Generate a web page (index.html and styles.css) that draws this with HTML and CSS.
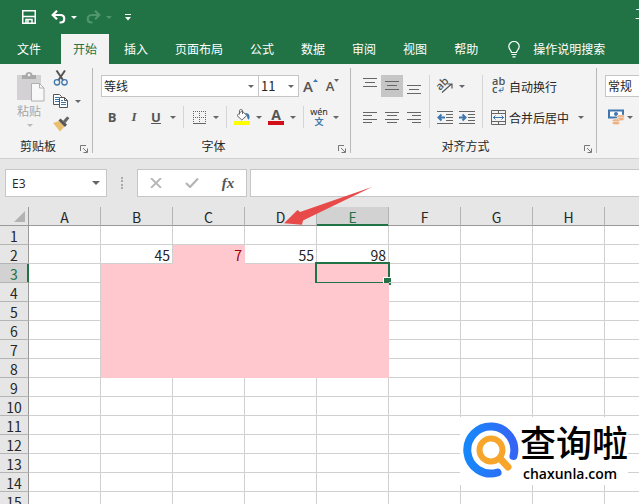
FILE: index.html
```html
<!DOCTYPE html>
<html lang="zh-CN">
<head>
    <meta charset="UTF-8">
    <meta name="viewport" content="width=device-width, initial-scale=1.0">
    <title>Excel</title>
    <link rel="stylesheet" href="styles.css">
</head>
<body>
    <header class="title-bar">
        <button class="quick save" aria-label="保存">
            <svg width="14" height="14" viewBox="0 0 14 14" fill="none" stroke="#fff"><path d="M.75.75h12.5v12.5H.75z" stroke-width="1.5"/><path d="M1 6.5h12" stroke-width="1.5"/><path d="M4 13V9.5h6V13M6 10v3" stroke-width="1.5"/></svg>
        </button>
        <button class="quick undo" aria-label="撤销">
            <svg width="15" height="14" viewBox="0 0 15 14" fill="none" stroke="#fff" stroke-width="2.2"><path d="M6 .7 1.700 5l4.300 4.300M2 5h7.5c5 0 5 7.500 0 7.500H8.500"/></svg>
            <i class="caret"></i>
        </button>
        <button class="quick redo" aria-label="恢复">
            <svg width="15" height="14" viewBox="0 0 15 14" fill="none" stroke="#4f9670" stroke-width="2.2"><path d="M9 .7 13.300 5 9 9.300M13 5H5.500c-5 0-5 7.500 0 7.500H6.500"/></svg>
            <i class="caret"></i>
        </button>
        <button class="quick more" aria-label="自定义快速访问工具栏">
            <svg width="6" height="7" viewBox="0 0 6 7" fill="#fff"><path d="M0 0h6v1H0zM0 3h6L3 6.500z"/></svg>
        </button>
        <span class="book-name">工</span>
    </header>

    <nav class="tabs">
        <button class="tab file">文件</button>
        <button class="tab active">开始</button>
        <button class="tab">插入</button>
        <button class="tab">页面布局</button>
        <button class="tab">公式</button>
        <button class="tab">数据</button>
        <button class="tab">审阅</button>
        <button class="tab">视图</button>
        <button class="tab">帮助</button>
        <button class="tab tell-me">
            <svg width="12" height="17" viewBox="0 0 12 17" fill="none" stroke="#fff" stroke-width="1.200"><path d="M3.500 11.500c0-2-2.700-3-2.700-6a5.200 5 0 0 1 10.400 0c0 3-2.700 4-2.700 6zM3.500 13.500h5M4.500 15.800h3"/></svg>
            操作说明搜索
        </button>
    </nav>

    <section class="ribbon">
        <div class="group clipboard">
            <div class="group-body">
                <button class="paste" disabled>
                    <svg width="28" height="30" viewBox="0 0 28 30"><path d="M0 3h24v25H0z" fill="#d3d1d3"/><path d="M5 3h3.500C8.500-1 15.500-1 15.500 3H19v4H5z" fill="#aaa"/><circle cx="12" cy="3" r="1.300" fill="#f3f3f3"/><path d="M14.500 11.500h8l4.500 4.500v13H14.500z" fill="#f8f8f8" stroke="#b0b0b0"/><path d="M22.500 11.500V16H27" fill="none" stroke="#b0b0b0"/></svg>
                    <span>粘贴</span>
                    <i class="caret"></i>
                </button>
                <div class="clip-tools">
                    <button class="icon-btn" aria-label="剪切">
                        <svg width="16" height="16" viewBox="0 0 16 16" fill="none"><path d="M3.500.5l6.800 10M12 .5l-6.800 10" stroke="#555" stroke-width="2"/><circle cx="4" cy="12.300" r="2.700" stroke="#3e77ad" stroke-width="1.300"/><circle cx="11.500" cy="12.300" r="2.700" stroke="#3e77ad" stroke-width="1.300"/></svg>
                    </button>
                    <button class="icon-btn copy" aria-label="复制">
                        <svg width="16" height="16" viewBox="0 0 16 16" fill="#fff" stroke="#555"><path d="M.5 1.500h6l2 2v8h-8z"/><path d="M2 4.500h4M2 6.500h4M2 8.500h4" stroke="#3e77ad"/><path d="M6.500 4.500h5l3 3v7h-8z"/><path d="M11.500 4.500v3h3" fill="none"/><path d="M8 9.500h5M8 11.500h5M8 7.500h2" stroke="#3e77ad"/></svg>
                        <i class="caret"></i>
                    </button>
                    <button class="icon-btn" aria-label="格式刷">
                        <svg width="17" height="16" viewBox="0 0 17 16"><path d="M0 7l6-2 6 5-5 5.500z" fill="#eabf72"/><path d="M5.500 4.500l2-2 6.500 6-2 2.500z" fill="#555"/><path d="M10 5l4-4.500L16.500 2 12.500 7z" fill="#666"/></svg>
                    </button>
                </div>
            </div>
            <div class="group-label"><span>剪贴板</span><button class="launcher" aria-label="剪贴板设置"><svg width="8" height="8" viewBox="0 0 8 8" fill="none" stroke="#777"><path d="M.5 6V.5H6M3 3l4 4M7.500 3.500v4h-4"/></svg></button></div>
        </div>

        <div class="group font">
            <div class="group-body rows">
                <div class="row">
                    <div class="combo font-name"><select aria-label="字体"><option>等线</option></select></div>
                    <div class="combo font-size"><select aria-label="字号"><option>11</option></select></div>
                    <button class="tool letter grow" aria-label="增大字号">A<svg width="6" height="4" viewBox="0 0 6 4" fill="#3e77ad"><path d="M0 3h5L2.500 0z"/></svg></button>
                    <button class="tool letter shrink" aria-label="减小字号">A<svg width="6" height="4" viewBox="0 0 6 4" fill="#666"><path d="M0 0h5L2.500 3z"/></svg></button>
                </div>
                <div class="row">
                    <button class="tool letter">B</button>
                    <button class="tool letter italic">I</button>
                    <button class="tool letter underline">U</button>
                    <button class="drop" aria-label="下划线选项"><i class="caret"></i></button>
                    <span class="divider"></span>
                    <button class="tool" aria-label="边框"><svg width="13" height="13" viewBox="0 0 13 13" fill="none" stroke="#666"><path d="M.5 0v12M6.500 0v12M12.500 0v12M0 .5h13M0 6.500h13" stroke-dasharray="1 1"/><path d="M0 12.500h13"/></svg></button>
                    <button class="drop" aria-label="边框选项"><i class="caret"></i></button>
                    <span class="divider"></span>
                    <button class="tool" aria-label="填充颜色"><svg width="17" height="16" viewBox="0 0 17 16"><path d="M0 12h16v4H0z" fill="#ffff00"/><path d="M3 6.500l5-4.700 4.800 4.700-5 4.500z" fill="#fff" stroke="#666"/><path d="M5.500 5.500V1.800c0-2 3-2 3 0V5" fill="none" stroke="#666"/><path d="M11 4c4 0 5.500 2.500 4 6.500-1 .5-2-2-2-4z" fill="#3e77ad"/></svg></button>
                    <button class="drop" aria-label="填充颜色选项"><i class="caret"></i></button>
                    <button class="tool letter font-color" aria-label="字体颜色">A</button>
                    <button class="drop" aria-label="字体颜色选项"><i class="caret"></i></button>
                    <span class="divider"></span>
                    <button class="tool phonetic" aria-label="拼音"><span>wén</span><span class="wen">文</span></button>
                    <button class="drop" aria-label="拼音选项"><i class="caret"></i></button>
                </div>
            </div>
            <div class="group-label"><span>字体</span><button class="launcher" aria-label="字体设置"><svg width="8" height="8" viewBox="0 0 8 8" fill="none" stroke="#777"><path d="M.5 6V.5H6M3 3l4 4M7.500 3.500v4h-4"/></svg></button></div>
        </div>

        <div class="group align">
            <div class="group-body">
                <div class="rows">
                    <div class="row">
                        <button class="tool" aria-label="顶端对齐"><svg width="14" height="16" viewBox="0 0 14 16" stroke="#666"><path d="M0 .5h14M2 4.500h10M0 8.500h14"/></svg></button>
                        <button class="tool pressed" aria-label="垂直居中"><svg width="14" height="16" viewBox="0 0 14 16" stroke="#666"><path d="M0 3.500h14M2 7.500h10M0 11.500h14"/></svg></button>
                        <button class="tool" aria-label="底端对齐"><svg width="14" height="16" viewBox="0 0 14 16" stroke="#666"><path d="M0 7.500h14M2 11.500h10M0 15.500h14"/></svg></button>
                    </div>
                    <div class="row">
                        <button class="tool" aria-label="左对齐"><svg width="14" height="11" viewBox="0 0 14 11" stroke="#666"><path d="M0 .5h14M0 3.500h9M0 7.500h14M0 10.500h9"/></svg></button>
                        <button class="tool" aria-label="居中"><svg width="14" height="11" viewBox="0 0 14 11" stroke="#666"><path d="M0 .5h14M2 3.500h10M0 7.500h14M2 10.500h10"/></svg></button>
                        <button class="tool" aria-label="右对齐"><svg width="14" height="11" viewBox="0 0 14 11" stroke="#666"><path d="M0 .5h14M5 3.500h9M0 7.500h14M5 10.500h9"/></svg></button>
                    </div>
                </div>
                <span class="divider"></span>
                <div class="rows">
                    <div class="row">
                        <button class="tool orient" aria-label="方向"><svg width="18" height="18" viewBox="0 0 18 18"><text x="1" y="11" transform="rotate(-45 6 9)">ab</text><path d="M6 15.500L15.500 7M11.500 7H16v4.500" fill="none" stroke="#555" stroke-width="1.200"/></svg></button>
                        <button class="drop" aria-label="方向选项"><i class="caret"></i></button>
                    </div>
                    <div class="row">
                        <button class="tool" aria-label="减少缩进量"><svg width="16" height="13" viewBox="0 0 16 13" fill="none" stroke="#666"><path d="M0 .5h16M9 3.500h7M9 6.500h7M9 9.500h7M0 12.500h16"/><path d="M8 6.500H2M4.500 3.500l-3 3 3 3" stroke="#3e77ad" stroke-width="2"/></svg></button>
                        <button class="tool" aria-label="增加缩进量"><svg width="16" height="13" viewBox="0 0 16 13" fill="none" stroke="#666"><path d="M0 .5h16M9 3.500h7M9 6.500h7M9 9.500h7M0 12.500h16"/><path d="M0 6.500h6M3.500 3.500l3 3-3 3" stroke="#3e77ad" stroke-width="2"/></svg></button>
                    </div>
                </div>
                <span class="divider"></span>
                <div class="rows">
                    <button class="text-tool"><span class="tool"><svg class="wrap-icon" width="14" height="18" viewBox="0 0 14 18"><text x="1" y="8">ab</text><text x="1" y="16">c</text><path d="M12 10v3.500H8M10 11.500l-2 2 2 2" fill="none" stroke="#3e77ad"/></svg></span>自动换行</button>
                    <button class="text-tool"><span class="tool"><svg width="15" height="15" viewBox="0 0 15 15" fill="none" stroke="#666"><path d="M.5.5h14v14H.5zM.5 3.500h14M.5 11.500h14M7.500.5v3M7.500 11.500v3"/><path d="M2 7.500h11M4.500 5.500l-2 2 2 2M10.500 5.500l2 2-2 2" stroke="#3e77ad"/></svg></span>合并后居中<i class="caret"></i></button>
                </div>
            </div>
            <div class="group-label"><span>对齐方式</span><button class="launcher" aria-label="对齐设置"><svg width="8" height="8" viewBox="0 0 8 8" fill="none" stroke="#777"><path d="M.5 6V.5H6M3 3l4 4M7.500 3.500v4h-4"/></svg></button></div>
        </div>

        <div class="group number">
            <div class="group-body rows">
                <div class="row">
                    <div class="combo format"><select aria-label="数字格式"><option>常规</option></select></div>
                </div>
                <div class="row">
                    <button class="tool" aria-label="会计数字格式"><svg width="17" height="16" viewBox="0 0 17 16"><path d="M1 1.500h14v7H1z" fill="#fff" stroke="#3e77ad" stroke-width="2"/><circle cx="8" cy="5" r="2" fill="#3e77ad"/><g fill="#eeb07e" stroke="#f3f3f3" stroke-width=".6"><ellipse cx="12.500" cy="7.500" rx="3.800" ry="1.800"/><ellipse cx="12.500" cy="10" rx="3.800" ry="1.800"/><ellipse cx="8" cy="11.500" rx="3.800" ry="1.800"/><ellipse cx="8" cy="14" rx="3.800" ry="1.800"/></g></svg></button>
                    <button class="drop" aria-label="货币选项"><i class="caret"></i></button>
                </div>
            </div>
        </div>
    </section>

    <section class="formula-bar">
        <div class="name-box"><input type="text" value="E3" aria-label="名称框"><i class="caret"></i></div>
        <span class="grip"></span>
        <div class="formula-tools">
            <button aria-label="取消"><svg width="12" height="10" viewBox="0 0 12 10" stroke="#b5b5b5" stroke-width="1.800"><path d="M1 0l10 10M11 0L1 10"/></svg></button>
            <button aria-label="输入"><svg width="14" height="10" viewBox="0 0 14 10" fill="none" stroke="#b5b5b5" stroke-width="2.200"><path d="M1 5l4 4 8-8.500"/></svg></button>
            <button class="fx" aria-label="插入函数">fx</button>
        </div>
        <input class="formula" type="text" aria-label="编辑栏">
        <svg class="pointer" width="90" height="40" viewBox="0 0 90 40"><path d="M2 37.300L15.500 24l2.500 2L90 1 21 34.500l-1 4.200z" fill="#e84a4a"/></svg>
    </section>

    <main class="sheet">
        <table class="grid">
            <thead><tr id="columns"><th class="corner"><svg width="11" height="11" viewBox="0 0 11 11" fill="#b3b3b3"><path d="M11 0v11H0z"/></svg></th></tr></thead>
            <tbody id="cells"></tbody>
        </table>
    </main>

    <div class="watermark">
        <svg width="56" height="56" viewBox="0 0 56 56" fill="none" stroke-linecap="round">
            <defs><linearGradient id="ring" x1="0" x2="1"><stop offset="0" stop-color="#1787fb"/><stop offset="1" stop-color="#3565f5"/></linearGradient></defs>
            <path d="M50.500 34A23.500 23.500 0 1 0 34.500 50.500" stroke="url(#ring)" stroke-width="8"/>
            <circle cx="28" cy="28" r="11.500" stroke="#f7a52b" stroke-width="6"/>
            <path d="M37 36.500l8 8.500" stroke="#f7a52b" stroke-width="7"/>
        </svg>
        <div class="brand">
            <strong>查询啦</strong>
            <span>chaxunla.com</span>
        </div>
    </div>

    <script src="script.js"></script>
</body>
</html>
```
FILE: styles.css
```css
* {
    box-sizing: border-box;
}

body {
    margin: 0;
    height: 100vh;
    display: flex;
    flex-direction: column;
    position: relative;
    overflow: hidden;
    background: #fff;
    color: #262626;
    font-family: "Noto Sans CJK SC", sans-serif;
    font-size: 12px;
}

button, input, select {
    margin: 0;
    padding: 0;
    border: 0;
    background: none;
    color: inherit;
    font: inherit;
}

svg {
    display: block;
    flex-shrink: 0;
}

.caret {
    flex-shrink: 0;
    border: 3px solid transparent;
    border-top-color: #666;
    border-bottom: 0;
}

/* Title bar and tabs */
.title-bar {
    display: flex;
    align-items: center;
    height: 34px;
    flex-shrink: 0;
    padding-left: 22px;
    background: #217346;
    color: #fff;
    white-space: nowrap;
    overflow: hidden;
}

.quick {
    display: flex;
    align-items: center;
    gap: 5px;
    margin-right: 9px;
}

.save {
    margin-right: 15px;
}

.title-bar .caret {
    border-top-color: #fff;
}

.redo .caret {
    border-top-color: #4f9670;
}

.more {
    margin-left: 4px;
}

.book-name {
    margin-left: auto;
    width: 4px;
    line-height: 28px;
    align-self: flex-start;
}

.tabs {
    display: flex;
    gap: 3px;
    height: 30px;
    flex-shrink: 0;
    padding-left: 5px;
    background: #217346;
    color: #fff;
}

.tab {
    flex-shrink: 0;
    padding: 0 12px;
    line-height: 26px;
}

.tab.file {
    margin-right: 5px;
}

.tab.active {
    background: #f3f3f3;
    color: #217346;
}

.tell-me {
    display: flex;
    align-items: center;
    gap: 13px;
    margin-left: 3px;
}

/* Ribbon */
.ribbon {
    display: flex;
    flex-shrink: 0;
    height: 95px;
    padding: 4px 0 5px;
    background: #f3f3f3;
    border-bottom: 1px solid #d0d0d0;
}

.group {
    display: flex;
    flex-direction: column;
    flex-shrink: 0;
    border-right: 1px solid #b8b8b8;
}

.group.number {
    flex: 1 0 0;
    min-width: 0;
    overflow: hidden;
    border-right: 0;
}

.group-body {
    display: flex;
    padding: 7px 8px 0;
}

.font .group-body {
    padding-right: 6px;
}

.align .group-body {
    padding-right: 12px;
}

.group-label {
    display: flex;
    align-items: center;
    height: 14px;
    margin-top: auto;
    line-height: 12px;
}

.group-label span {
    flex: 1;
    text-align: center;
}

.launcher {
    width: 16px;
    display: flex;
    justify-content: center;
    align-self: flex-end;
}

.rows {
    display: flex;
    flex-direction: column;
    gap: 9px;
}

.row {
    display: flex;
    height: 22px;
}

.clipboard .group-body {
    gap: 8px;
    padding: 2px 8px 0 17px;
}

.paste {
    display: flex;
    flex-direction: column;
    align-items: flex-start;
    width: 28px;
    padding-top: 2px;
    color: #a6a6a6;
}

.paste span {
    line-height: 18px;
}

.paste .caret {
    margin: 4px 0 0 10px;
    border-top-color: #bbb;
}

.clip-tools {
    display: flex;
    flex-direction: column;
    gap: 7px;
}

.icon-btn {
    display: flex;
    align-items: center;
    height: 16px;
}

.copy {
    gap: 6px;
    padding-right: 3px;
}

.tool {
    display: flex;
    align-items: center;
    justify-content: center;
    width: 22px;
    height: 22px;
    flex-shrink: 0;
}

.pressed {
    background: #c6c6c6;
}

.drop {
    display: flex;
    align-items: center;
    justify-content: center;
    width: 12px;
}

.divider {
    width: 1px;
    margin: 0 4px;
    background: #d5d5d5;
}

.combo {
    position: relative;
    height: 22px;
    background: #fff;
    border: 1px solid #c6c6c6;
}

.combo select {
    appearance: none;
    width: 100%;
    height: 100%;
    padding-left: 2px;
    line-height: 20px;
}

.combo::after {
    content: "";
    position: absolute;
    right: 4px;
    top: 9px;
    border: 3px solid transparent;
    border-top-color: #666;
    border-bottom: 0;
    pointer-events: none;
}

.font-name {
    width: 158px;
}

.font-size {
    width: 41px;
    margin-left: -1px;
    margin-right: 1px;
    font-size: 13px;
}

.format {
    width: 90px;
    flex-shrink: 0;
}

.letter {
    color: #555;
    font-family: "Open Sans", sans-serif;
    font-size: 13px;
    font-weight: bold;
}

.grow, .shrink {
    font-size: 15px;
    font-weight: 600;
}

.grow svg, .shrink svg {
    align-self: flex-start;
    margin-top: 4px;
}

.shrink {
    font-size: 13px;
}

.italic {
    font-family: "Liberation Serif", serif;
    font-style: italic;
}

.underline {
    text-decoration: underline;
}

.font-color {
    height: 16px;
    width: 16px;
    margin: 3px 3px 0;
    align-items: flex-end;
    border-bottom: 4px solid #d00f16;
    font-size: 14px;
    line-height: 12px;
}

.phonetic {
    flex-direction: column;
    font-family: "Noto Sans", "Noto Sans CJK SC", sans-serif;
    font-size: 9px;
    line-height: 10px;
}

.wen {
    color: #3e77ad;
    font-weight: bold;
}

.orient text, .wrap-icon text {
    fill: #555;
    font: 600 11px "Open Sans", sans-serif;
}

.text-tool {
    display: flex;
    align-items: center;
    height: 22px;
}

.text-tool .caret {
    margin-left: 9px;
}

/* Formula bar */
.formula-bar {
    position: relative;
    z-index: 1;
    display: flex;
    flex-shrink: 0;
    padding: 10px 0 10px 5px;
    background: #e6e6e6;
}

.name-box {
    display: flex;
    align-items: center;
    width: 102px;
    height: 28px;
    padding: 0 6px;
    background: #fff;
    border: 1px solid #c6c6c6;
}

.name-box input {
    flex: 1;
    min-width: 0;
    font-family: "Open Sans", sans-serif;
}

.name-box .caret {
    border-width: 4px 4px 0;
}

.grip {
    width: 2px;
    height: 12px;
    margin: 8px 14px;
    border-left: 2px dotted #aaa;
}

.formula-tools {
    display: flex;
    align-items: center;
    width: 110px;
    background: #fff;
    border: 1px solid #c6c6c6;
}

.formula-tools button {
    display: flex;
    flex: 1;
    justify-content: center;
}

.formula-tools .fx {
    color: #555;
    font: italic bold 15px "Liberation Serif", serif;
}

.formula {
    flex: 1;
    min-width: 0;
    margin-left: 3px;
    background: #fff;
    border: 1px solid #c6c6c6;
    border-right: 0;
}

/* Callout arrow over the column headers */
.pointer {
    position: absolute;
    left: 282px;
    top: 27px;
    pointer-events: none;
}

/* Worksheet */
.sheet {
    flex: 1;
    min-height: 0;
    overflow: hidden;
}

.grid {
    width: max-content;
    table-layout: fixed;
    border-spacing: 0;
    font-size: 14px;
    line-height: 16px;
}

.grid th, .grid td {
    height: 19px;
    width: 72px;
    min-width: 72px;
    padding: 2px 2px 0;
    border-right: 1px solid #d0d0d0;
    border-bottom: 1px solid #d0d0d0;
}

.grid th {
    background: #e6e6e6;
    border-color: #b4b4b4;
    font-weight: normal;
}

.grid thead th {
    padding-top: 1px;
    border-bottom-color: #999;
}

.grid .row-head, .grid .corner {
    width: 29px;
    min-width: 29px;
    border-right-color: #999;
}

.corner svg {
    margin-left: 12px;
}

.grid td {
    position: relative;
    text-align: right;
}

.grid .marked {
    background: #ffc7ce;
    border-color: #ffc7ce;
    color: #9c0006;
}

.grid thead .current {
    background: #d2d2d2;
    color: #217346;
    box-shadow: inset 0 -1px #217346;
    border-bottom-color: #217346;
}

.grid .row-head.current {
    background: #d2d2d2;
    color: #217346;
    box-shadow: inset -1px 0 #217346;
    border-right-color: #217346;
}

.selected::before {
    content: "";
    position: absolute;
    inset: -2px;
    border: 2px solid #217346;
}

.selected::after {
    content: "";
    position: absolute;
    right: -4px;
    bottom: -4px;
    width: 7px;
    height: 7px;
    background: #217346;
    border: 1px solid #fff;
}

/* Site mark in the corner */
.watermark {
    position: absolute;
    right: 11px;
    bottom: 19px;
    display: flex;
    align-items: center;
    gap: 1px;
    padding: 0 0 2px 3px;
    background: #fff;
    color: #000;
}

.brand {
    display: flex;
    flex-direction: column;
}

.brand strong {
    font-size: 36px;
    font-weight: 500;
    line-height: 48px;
}

.brand span {
    padding-left: 3px;
    font-family: "Open Sans", sans-serif;
    font-size: 14px;
    font-weight: 600;
    line-height: 18px;
}
```
FILE: script.js
```javascript
const values = { B2: 45, C2: 7, D2: 55, E2: 98 };
const selected = { column: 'E', row: 3 };

const head = document.getElementById('columns');
const body = document.getElementById('cells');

// Only as many columns and rows as the window can show
const columnCount = Math.min(26, Math.ceil((window.innerWidth - 29) / 72));
const rowCount = Math.ceil((window.innerHeight - body.getBoundingClientRect().top) / 19);
const columns = 'ABCDEFGHIJKLMNOPQRSTUVWXYZ'.slice(0, columnCount).split('');

// Cells filled by the conditional format
function isMarked(column, row) {
    return (column === 'C' && row === 2) ||
        ('BCDE'.includes(column) && row >= 3 && row <= 8);
}

columns.forEach(column => {
    const th = document.createElement('th');
    th.textContent = column === columns[columns.length - 1] ? '' : column;
    if (column === selected.column) th.className = 'current';
    head.appendChild(th);
});

for (let row = 1; row <= rowCount; row++) {
    const tr = document.createElement('tr');
    const th = document.createElement('th');
    th.textContent = row;
    th.className = row === selected.row ? 'row-head current' : 'row-head';
    tr.appendChild(th);

    columns.forEach(column => {
        const td = document.createElement('td');
        td.textContent = values[column + row] || '';
        if (isMarked(column, row)) td.classList.add('marked');
        if (column === selected.column && row === selected.row) td.classList.add('selected');
        tr.appendChild(td);
    });
    body.appendChild(tr);
}
```
